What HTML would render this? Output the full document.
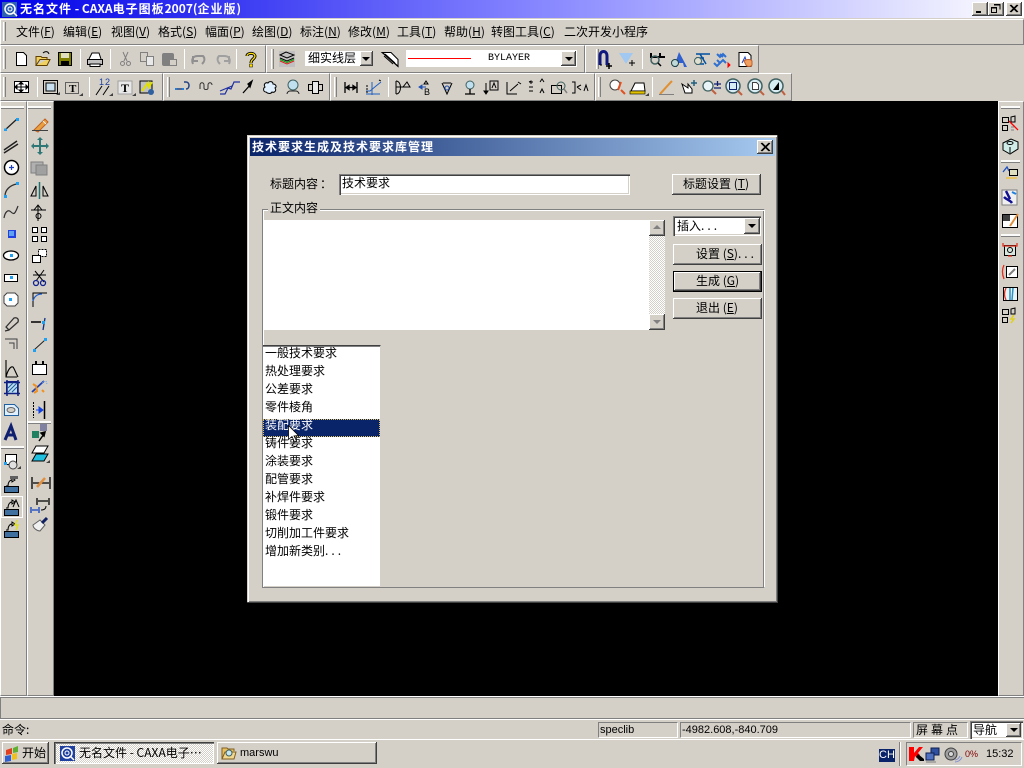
<!DOCTYPE html>
<html lang="zh"><head><meta charset="utf-8"><title>CAXA</title>
<style>
html,body{margin:0;padding:0;background:#d4d0c8}
body{width:1024px;height:768px;overflow:hidden;position:relative;font:12px/14px "WenQuanYi Zen Hei","Noto Sans CJK SC",sans-serif;color:#000}
div,span.a{position:absolute;box-sizing:border-box}
.t{white-space:nowrap}
.up{background:#d4d0c8;box-shadow:inset -1px -1px #404040,inset 1px 1px #fff,inset -2px -2px #808080}
.sunk{background:#fff;box-shadow:inset 1px 1px #808080,inset 2px 2px #404040,inset -1px -1px #fff,inset -2px -2px #d4d0c8}
.tb{background:#d4d0c8;border-top:1px solid #fff;border-left:1px solid #fff;border-bottom:1px solid #808080;border-right:1px solid #808080}
.sf{border:1px solid;border-color:#808080 #fff #fff #808080}
.w{letter-spacing:1px}
u{text-decoration:underline}
svg{position:absolute;left:0;top:0}
</style></head><body>

<!-- title bar -->
<div style="left:0;top:0;width:1024px;height:18px;background:linear-gradient(90deg,#0000e8,#8080ff 50%,#fff 100%)"></div>
<div class="t" style="left:20px;top:2px;color:#fff;font-weight:bold;font-size:12px"><span class="w">无名文件</span> - CAXA<span class="w">电子图板</span>2007(<span class="w">企业版</span>)</div>
<div class="up" style="left:972px;top:2px;width:16px;height:14px"></div>
<div class="up" style="left:988px;top:2px;width:16px;height:14px"></div>
<div class="up" style="left:1006px;top:2px;width:16px;height:14px"></div>

<!-- menu bar -->
<div class="tb" style="left:0;top:19px;width:1024px;height:26px"></div>
<div class="t" style="left:16px;top:25px">文件(<u>F</u>)</div>
<div class="t" style="left:63px;top:25px">编辑(<u>E</u>)</div>
<div class="t" style="left:111px;top:25px">视图(<u>V</u>)</div>
<div class="t" style="left:158px;top:25px">格式(<u>S</u>)</div>
<div class="t" style="left:205px;top:25px">幅面(<u>P</u>)</div>
<div class="t" style="left:252px;top:25px">绘图(<u>D</u>)</div>
<div class="t" style="left:300px;top:25px">标注(<u>N</u>)</div>
<div class="t" style="left:348px;top:25px">修改(<u>M</u>)</div>
<div class="t" style="left:397px;top:25px">工具(<u>T</u>)</div>
<div class="t" style="left:444px;top:25px">帮助(<u>H</u>)</div>
<div class="t" style="left:491px;top:25px">转图工具(<u>C</u>)</div>
<div class="t" style="left:564px;top:25px">二次开发小程序</div>

<!-- toolbars -->
<div class="tb" style="left:0;top:45px;width:266px;height:28px"></div>
<div class="tb" style="left:266px;top:45px;width:319px;height:28px"></div>
<div class="tb" style="left:585px;top:45px;width:174px;height:28px"></div>
<div class="tb" style="left:0;top:73px;width:163px;height:28px"></div>
<div class="tb" style="left:163px;top:73px;width:167px;height:28px"></div>
<div class="tb" style="left:330px;top:73px;width:265px;height:28px"></div>
<div class="tb" style="left:595px;top:73px;width:197px;height:28px"></div>

<!-- layer combo -->
<div style="left:304px;top:50px;width:69px;height:17px;background:#fff;border:1px solid #d4d0c8"></div>
<div class="t" style="left:308px;top:51px">细实线层</div>
<div class="up" style="left:360px;top:51px;width:13px;height:15px"></div>
<!-- line combo -->
<div style="left:406px;top:50px;width:171px;height:17px;background:#fff"></div>
<div style="left:408px;top:58px;width:63px;height:1px;background:#f00"></div>
<div class="t" style="left:488px;top:52px;font:10px/14px 'Liberation Mono',monospace">BYLAYER</div>
<div class="up" style="left:561px;top:51px;width:15px;height:15px"></div>

<!-- left toolbars / right toolbar -->
<div class="tb" style="left:0;top:101px;width:27px;height:595px"></div>
<div class="tb" style="left:27px;top:101px;width:27px;height:595px"></div>
<div class="tb" style="left:998px;top:101px;width:26px;height:595px"></div>

<!-- canvas -->
<div style="left:54px;top:101px;width:944px;height:595px;background:#000"></div>

<!-- status areas -->
<div style="left:0;top:696px;width:1024px;height:2px;background:#fff"></div>
<div style="left:0;top:697px;width:1024px;height:22px;background:#d4d0c8;border-top:1px solid #808080;border-left:1px solid #808080;border-bottom:1px solid #808080"></div>
<div style="left:0;top:719px;width:1024px;height:1px;background:#fff"></div>
<div class="t" style="left:2px;top:723px">命令:</div>
<div class="sf t" style="left:598px;top:722px;width:80px;height:16px;padding:0 1px;font:11px/14px 'Liberation Sans',sans-serif">speclib</div>
<div class="sf t" style="left:680px;top:722px;width:231px;height:16px;padding:0 1px;font:11px/14px 'Liberation Sans',sans-serif">-4982.608,-840.709</div>
<div class="sf t" style="left:913px;top:722px;width:55px;height:16px;padding:0 2px;line-height:14px;letter-spacing:3px">屏幕点</div>
<div class="sunk" style="left:970px;top:721px;width:53px;height:18px"></div>
<div class="t" style="left:973px;top:723px">导航</div>
<div class="up" style="left:1006px;top:723px;width:15px;height:14px"></div>
<div style="left:0;top:739px;width:1024px;height:1px;background:#fff"></div>

<!-- taskbar -->
<div class="up" style="left:2px;top:742px;width:47px;height:22px"></div>
<div class="t" style="left:22px;top:746px">开始</div>
<div style="left:54px;top:742px;width:160px;height:22px;background-color:#fff;background-image:repeating-conic-gradient(#d4d0c8 0 25%,#fff 0 50%);background-size:2px 2px;box-shadow:inset 1px 1px #404040,inset 2px 2px #808080,inset -1px -1px #fff"></div>
<div class="t" style="left:79px;top:746px">无名文件 - CAXA电子…</div>
<div class="up" style="left:217px;top:742px;width:160px;height:22px"></div>
<div class="t" style="left:240px;top:746px;font:11px/14px 'Liberation Sans',sans-serif">marswu</div>
<div style="left:879px;top:749px;width:16px;height:13px;background:#0a246a;color:#fff;text-align:center;font:11px/13px 'Liberation Sans',sans-serif">CH</div>
<div style="left:899px;top:742px;width:1px;height:24px;background:#808080"></div>
<div style="left:900px;top:742px;width:1px;height:24px;background:#fff"></div>
<div class="sf" style="left:906px;top:742px;width:116px;height:24px"></div>
<div class="t" style="left:965px;top:749px;font:9px/10px 'Liberation Sans',sans-serif;color:#800000">0%</div>
<div class="t" style="left:986px;top:747px;font:11px/14px 'Liberation Sans',sans-serif">15:32</div>

<!-- dialog -->
<div style="left:247px;top:135px;width:531px;height:468px;background:#d4d0c8;box-shadow:inset -1px -1px #404040,inset 1px 1px #d4d0c8,inset 2px 2px #fff,inset -2px -2px #808080"></div>
<div style="left:250px;top:138px;width:525px;height:18px;background:linear-gradient(90deg,#0a246a,#a6caf0)"></div>
<div class="t w" style="left:252px;top:140px;color:#fff;font-weight:bold">技术要求生成及技术要求库管理</div>
<div class="up" style="left:757px;top:140px;width:16px;height:14px"></div>

<div class="t" style="left:270px;top:177px">标题内容</div>
<div class="t" style="left:320px;top:177px">：</div>
<div class="sunk" style="left:339px;top:174px;width:291px;height:21px"></div>
<div class="t" style="left:342px;top:176px">技术要求</div>
<div class="up" style="left:672px;top:174px;width:89px;height:21px"></div>
<div class="t" style="left:683px;top:177px">标题设置 (<u>T</u>)</div>

<div style="left:262px;top:209px;width:503px;height:379px;border:1px solid;border-color:#808080 #fff #808080 #808080;box-shadow:inset 1px 1px #fff,inset -1px 0 #808080"></div>
<div class="t" style="left:268px;top:201px;background:#d4d0c8;padding:0 2px">正文内容</div>

<div style="left:264px;top:220px;width:385px;height:110px;background:#fff"></div>
<div style="left:649px;top:220px;width:16px;height:110px;background-color:#fff;background-image:repeating-conic-gradient(#d4d0c8 0 25%,#fff 0 50%);background-size:2px 2px"></div>
<div class="up" style="left:649px;top:220px;width:16px;height:16px"></div>
<div class="up" style="left:649px;top:314px;width:16px;height:16px"></div>

<div class="sunk" style="left:673px;top:216px;width:88px;height:20px"></div>
<div class="t" style="left:677px;top:219px">插入<span style="letter-spacing:3px">...</span></div>
<div class="up" style="left:744px;top:218px;width:16px;height:16px"></div>

<div class="up" style="left:673px;top:244px;width:89px;height:21px"></div>
<div class="t" style="left:696px;top:247px">设置 (<u>S</u>)<span style="letter-spacing:3px">...</span></div>
<div class="up" style="left:673px;top:271px;width:89px;height:21px;border:1px solid #000"></div>
<div class="t" style="left:696px;top:274px">生成 (<u>G</u>)</div>
<div class="up" style="left:673px;top:298px;width:89px;height:21px"></div>
<div class="t" style="left:696px;top:301px">退出 (<u>E</u>)</div>

<!-- list -->
<div style="left:263px;top:345px;width:118px;height:241px;background:#fff;overflow:hidden;border-top:1px solid #404040;border-right:1px solid #d4d0c8;box-shadow:inset 0 1px #808080">
<div style="left:0;top:73px;width:117px;height:18px;background:#0a246a;outline:1px dotted #e0c060;outline-offset:-1px"></div>
<div class="t" style="left:2px;top:0">一般技术要求</div>
<div class="t" style="left:2px;top:18px">热处理要求</div>
<div class="t" style="left:2px;top:36px">公差要求</div>
<div class="t" style="left:2px;top:54px">零件棱角</div>
<div class="t" style="left:2px;top:72px;color:#fff">装配要求</div>
<div class="t" style="left:2px;top:90px">铸件要求</div>
<div class="t" style="left:2px;top:108px">涂装要求</div>
<div class="t" style="left:2px;top:126px">配管要求</div>
<div class="t" style="left:2px;top:144px">补焊件要求</div>
<div class="t" style="left:2px;top:162px">锻件要求</div>
<div class="t" style="left:2px;top:180px">切削加工件要求</div>
<div class="t" style="left:2px;top:198px">增加新类别<span style="letter-spacing:3px">...</span></div>
</div>

<!-- all icons -->
<svg width="1024" height="768" viewBox="0 0 1024 768" fill="none" stroke-width="1">
<!-- app icon -->
<rect x="2" y="2" width="15" height="15" fill="#3060b0"/><circle cx="10" cy="9" r="5" stroke="#fff" stroke-width="1.500"/><circle cx="10" cy="9" r="2" stroke="#fff"/><path d="M13 12l4 4" stroke="#fff" stroke-width="1.500"/>
<!-- window buttons -->
<path d="M976 12h5" stroke="#000" stroke-width="2"/>
<path d="M994 4.500h6v5M991.500 7.500h5v5h-5z" stroke="#000"/><path d="M994 5h6M991 8h6" stroke="#000"/>
<path d="M1010 5l7 7M1017 5l-7 7M1011 5l7 7M1018 5l-7 7" stroke="#000"/>
<!-- grippers -->
<g stroke-width="1"><path d="M3.500 22v19" stroke="#fff"/><path d="M5.500 22v19" stroke="#808080"/>
<path d="M3.500 49v20M3.500 77v20M271.500 49v20M596.500 49v20M334.500 77v20M167.500 77v20M598.500 77v20" stroke="#fff"/>
<path d="M5.500 49v20M5.500 77v20M273.500 49v20M598.500 49v20M336.500 77v20M169.500 77v20M600.500 77v20" stroke="#808080"/>
<!-- separators -->
<path d="M80.500 49v20M110.500 49v20M184.500 49v20M236.500 49v20M642.500 49v20M37.500 77v20M89.500 77v20M388.500 77v20M652.500 77v20" stroke="#fff"/>
<path d="M1 107h23M28 107h23M1 447h23M28 422h23M1001 107h19M1001 161h19M1001 235h19" stroke="#fff" stroke-width="2" opacity=".9"/>
<path d="M1 108.500h23M28 108.500h23M1 448.500h23M28 423.500h23M1001 108.500h19M1001 162.500h19M1001 236.500h19" stroke="#808080"/>
</g>
<!-- row1 -->
<path d="M16.500 52.500h7l3 3v10h-10z" fill="#fff" stroke="#000"/>
<path d="M36 65.500v-9h5l1 1h5v2M36 65.500h11l3-6H40z" fill="#f0d060" stroke="#604000"/><path d="M43 53c2-2 5-2 6 1" stroke="#000"/>
<rect x="58.500" y="52.500" width="13" height="13" fill="#808000" stroke="#000"/><rect x="61" y="53" width="8" height="5" fill="#e0e0c0"/><rect x="61" y="61" width="8" height="4" fill="#000"/>
<path d="M89 59l3-6h7l2 6" fill="#fff" stroke="#000"/><rect x="87.500" y="59.500" width="15" height="5" fill="#c0c0c0" stroke="#000"/><rect x="90" y="64" width="10" height="2.500" fill="#fff" stroke="#000"/>
<path d="M123 52l4 9M128 52l-4 9" stroke="#808080"/><circle cx="122.500" cy="63.500" r="2" stroke="#808080"/><circle cx="128.500" cy="63.500" r="2" stroke="#808080"/>
<rect x="140.500" y="52.500" width="7" height="9" fill="#d4d0c8" stroke="#808080"/><rect x="146.500" y="56.500" width="7" height="9" fill="#e8e8e8" stroke="#808080"/>
<rect x="162" y="53" width="12" height="13" rx="2" fill="#808080"/><rect x="169.500" y="59.500" width="7" height="6" fill="#d4d0c8" stroke="#808080"/>
<path d="M193 64c-2-5 0-8 5-8h5c2 2 2 5-1 8M193 56v5h5" stroke="#909090" stroke-width="2"/>
<path d="M229 64c2-5 0-8-5-8h-5c-2 2-2 5 1 8M229 56v5h-5" stroke="#a0a0a0" stroke-width="2"/>
<path d="M247 56c0-3 7-4 8 0 0 3-4 3-4 7" stroke="#000" stroke-width="3"/><path d="M247 56c0-3 7-4 8 0 0 3-4 3-4 7" stroke="#ffe000" stroke-width="1.300"/><rect x="249.500" y="64" width="3" height="3" fill="#ffe000" stroke="#000" stroke-width=".5"/>
<rect x="279" y="51" width="16" height="16" fill="#c0c0c0"/><path d="M280 55l6-3 8 3-7 3zM280 58l7 3 7-3" stroke="#000"/><path d="M280 61l7 3 7-3" stroke="#e02020"/><path d="M280 59.500l7 3 7-3" stroke="#00a000"/>
<path d="M365 57h8l-4 4z" fill="#000" transform="translate(-3,0)"/>
<path d="M382 52.500h9l7 7v7zM398.500 66.500l-16-14M384 56l9 8M385 54l10 9" stroke="#000" fill="#fff"/>
<path d="M565 57h8l-4 4z" fill="#000"/>
<!-- right group row1 -->
<path d="M600 65v-9c0-6 7-6 7 0v9" stroke="#101880" stroke-width="3"/><path d="M607 66h2M600 65h2" stroke="#000"/><path d="M609 63v6M606 66h6" stroke="#000" stroke-width="1.500"/>
<path d="M619 53h14l-7 11z" fill="#a0c8f0"/><path d="M632 60v6M629 63h6" stroke="#000"/>
<path d="M651 53v4h14M660 53v4" stroke="#000" stroke-width="2"/><circle cx="655" cy="60" r="4" stroke="#406060" stroke-width="1.500"/><path d="M658 63l3 3" stroke="#000" stroke-width="1.500"/>
<path d="M679 52l-5 15h3l1-4h5l1 4h3z" fill="#3060d0"/><circle cx="675" cy="63" r="3.500" fill="#c0d8d8" stroke="#204040"/>
<path d="M696 54h14M700 54l6 10M704 58h-8M696 64h8" stroke="#0050a0" stroke-width="1.500"/><circle cx="698" cy="61" r="3.500" stroke="#406060" fill="#e0e0d0"/>
<path d="M717 54l3 3 3-3 3 3M717 60l3 3 3-3 3 3M720 54l3 3M714 63l3 3 3-3" stroke="#3070d0" stroke-width="2"/><path d="M728 63l2 2-2 2z" fill="#f00" stroke="#f00"/>
<path d="M739 52.500h9l3 3v11h-12z" fill="#fff" stroke="#000"/><path d="M742 63l3-6 2 6" stroke="#2040c0"/><path d="M744 61c2-2 7-2 8 0v4c-1 2-5 2-6 0z" fill="#f0a060" stroke="#c06030"/>
<!-- row2 -->
<rect x="14.500" y="81.500" width="14" height="11" fill="#fff" stroke="#000"/><path d="M21 83v8M16 87h11M21 82l-2 2h4zM21 92l-2-2h4zM15 87l2-2v4zM28 87l-2-2v4z" fill="#000" stroke="#000"/>
<rect x="43.500" y="80.500" width="14" height="13" stroke="#000"/><rect x="46" y="83" width="9" height="8" fill="#c8e0f0" stroke="#000"/><path d="M56 95h4v-3z" fill="#404040"/>
<rect x="65.500" y="82.500" width="13" height="11" stroke="#606060"/><text x="69" y="92" font-family="Liberation Serif,serif" font-weight="bold" font-size="11" fill="#000">T</text><path d="M79 96h4v-3z" fill="#404040"/>
<path d="M96 95l6-9M103 95l6-9" stroke="#000"/><text x="99" y="85" font-family="Liberation Sans,sans-serif" font-size="9" fill="#2040a0">1</text><text x="105" y="85" font-family="Liberation Sans,sans-serif" font-size="9" fill="#2040a0">2</text><path d="M109 96h4v-3z" fill="#404040"/>
<rect x="118" y="81" width="14" height="13" fill="#e8e8e8" stroke="#a0a0a0"/><text x="121" y="92" font-family="Liberation Serif,serif" font-weight="bold" font-size="12" fill="#000">T</text><path d="M132 96h4v-3z" fill="#404040"/>
<rect x="140" y="81" width="12" height="12" fill="#c0c0c0" stroke="#000"/><path d="M142 91l6-8 1 4 3-5" stroke="#e0e000" stroke-width="2"/><circle cx="151" cy="92" r="3" fill="#3060a0"/>
<path d="M176 89h7" stroke="#204080" stroke-width="1.500"/><path d="M184 82h2c4 0 4 7 0 7" stroke="#204080" stroke-width="1.500"/><rect x="175" y="88" width="2" height="2" fill="#2080e0"/><rect x="182" y="88" width="2" height="2" fill="#2080e0"/>
<path d="M200 90v-4c0-3 4-3 4 0v3c0 2 4 2 4 0v-3c0-3 4-3 4 0" stroke="#303030" transform="translate(0,-1)"/>
<path d="M220 94h5l3-6 3 1 3-7h6M220 91l12-5" stroke="#2030a0" stroke-width="1.200"/>
<path d="M243 93l8-9M252 81l-4 3 2 3z" stroke="#000" fill="#000" stroke-width="1.300"/>
<path d="M266 92c-3 0-3-4-1-5-2-3 1-5 3-4 1-2 5-2 5 1 3 0 4 3 2 4 2 3-1 5-3 4-1 2-4 2-6 0z" fill="#e0f0ff" stroke="#000"/>
<circle cx="293" cy="85" r="5" fill="#c0e0f0" stroke="#406060"/><path d="M287 94c0-2 2-3 3-3h6c1 0 3 1 3 3" stroke="#202020"/>
<rect x="308.500" y="84.500" width="14" height="6" stroke="#000"/><rect x="312.500" y="81.500" width="6" height="12" stroke="#000" fill="#e8e8e8"/>
<path d="M345 82v11M357 82v11M346 87.500h10M346 87.500l3-2v4zM356 87.500l-3-2v4z" stroke="#000" stroke-width="1.300"/>
<path d="M366 91h4l6-5 5-4M372 82v13M366 94h14" stroke="#2060c0"/><path d="M367 85v8M379 80l2 1" stroke="#000" stroke-dasharray="2 1"/>
<path d="M396 81v13M396 81c6 0 6 13 0 13M403 87l4-5 3 5zM396 87h7" stroke="#000"/>
<path d="M419 87h7M419 87l3-2v4z" stroke="#2050b0" fill="#2050b0"/><text x="424" y="95" font-family="Liberation Sans,sans-serif" font-size="9" fill="#000">B</text><path d="M424 84l2-3 2 3z" stroke="#000"/>
<path d="M442 83l5 11 5-11M443 83h8" stroke="#000"/><circle cx="447" cy="88" r="2" stroke="#2050b0"/>
<circle cx="470" cy="85" r="4" stroke="#406060" fill="#c0e0f0"/><path d="M470 89v5M465 94h10" stroke="#000" stroke-width="1.300"/>
<path d="M486 83v11M486 94l-2-3h4z" stroke="#000" fill="#000"/><rect x="490" y="81" width="8" height="9" stroke="#000"/><path d="M492 88l2-5 2 5" stroke="#000"/>
<path d="M507 82v12h10M510 91l8-7" stroke="#000"/><path d="M518 82l3 2" stroke="#000"/>
<path d="M529 82h4M529 82l2-1v3M540 82l2-3 2 3M529 91h4M540 93l2-4 2 4M533 87h-4" stroke="#000"/>
<rect x="551.500" y="85.500" width="10" height="8" stroke="#000"/><circle cx="561" cy="86" r="4" stroke="#406060"/><path d="M564 89l3 4" stroke="#808080" stroke-width="1.500"/>
<path d="M572 82h3v11h-3M577 87l4-2M577 87l4 3M584 91l2-6 2 6" stroke="#000"/>
<circle cx="615" cy="85" r="5" stroke="#404040" fill="#fff"/><path d="M621 82l-3 8M625 94l-4-4" stroke="#e05020" stroke-width="2"/>
<path d="M631 91l4-8h9l1 8z" fill="#fff" stroke="#000"/><rect x="630" y="91" width="15" height="3" fill="#e0c000" stroke="#000" stroke-width=".6"/><path d="M645 96h4v-3z" fill="#404040"/>
<path d="M660 94c3-3 7-8 12-13" stroke="#e09030" stroke-width="2"/><path d="M659 94.500h15" stroke="#808080"/>
<path d="M682 84l6 4v-4l4 5v4h-7z" fill="#fff" stroke="#000"/><path d="M691 83h6M694 80v6" stroke="#206080" stroke-width="1.500"/>
<circle cx="708" cy="86" r="5" stroke="#406060" fill="#e8f4f8" stroke-width="1.300"/><path d="M712 90l4 4" stroke="#c06040" stroke-width="2"/><path d="M714 84h7M717.500 81v5M714 88h7" stroke="#102070" stroke-width="1.300"/>
<circle cx="733" cy="86" r="7" stroke="#406060" fill="#d8ecf4" stroke-width="1.500"/><rect x="729.500" y="82.500" width="7" height="7" stroke="#102070"/><path d="M738 91l4 4" stroke="#c06040" stroke-width="2"/>
<circle cx="755" cy="86" r="7" stroke="#406060" fill="#d8ecf4" stroke-width="1.500"/><path d="M752.500 82.500h4l2 2v5h-6z" fill="#fff" stroke="#404040"/><path d="M760 91l4 4" stroke="#c06040" stroke-width="2"/>
<circle cx="776" cy="86" r="7" stroke="#406060" fill="#d8ecf4" stroke-width="1.500"/><path d="M773 90l6-8v8z" fill="#000"/><path d="M782 91l3 4" stroke="#c06040" stroke-width="2"/>
<!-- left col 1 -->
<path d="M5 130L17 119" stroke="#202020" stroke-width="1.300"/><rect x="4" y="128.500" width="3" height="2.500" fill="#20a0f0"/><rect x="16" y="118" width="3" height="3" fill="#20a0f0"/>
<path d="M4 150L17 141M4 153L18 144" stroke="#202020" stroke-width="1.500"/>
<circle cx="11.500" cy="167.500" r="7" fill="#fff" stroke="#000" stroke-width="1.500"/><path d="M9 167.500h5M11.500 165v5" stroke="#2040c0" stroke-width="1.200"/>
<path d="M5 196c0-6 5-11 12-12" stroke="#303030" stroke-width="1.300"/><rect x="4" y="195" width="3" height="3" fill="#20a0f0"/><rect x="16" y="182" width="3" height="3" fill="#20a0f0"/>
<path d="M4 218c1-6 4-9 7-6s4 2 7-6" stroke="#303030" stroke-width="1.200"/>
<rect x="8" y="230" width="8" height="8" fill="#2040e0"/><rect x="9" y="231" width="5" height="5" fill="#60a0f0"/>
<ellipse cx="11" cy="255.500" rx="7.500" ry="4.500" fill="#fff" stroke="#000" stroke-width="1.300"/><rect x="10" y="254" width="3" height="3" fill="#20a0f0"/>
<rect x="4.500" y="274.500" width="13" height="7" fill="#fff" stroke="#000"/><rect x="10" y="276" width="3" height="3" fill="#20a0f0"/>
<path d="M7 293h8l3 3v7l-3 3H7l-3-3v-7z" fill="#fff" stroke="#404040"/><rect x="9" y="298" width="3" height="3" fill="#20a0f0"/>
<path d="M6 327l8-9c3-1 5 1 4 4l-9 8zM5 331l4-1" stroke="#303030" stroke-width="1.300"/>
<path d="M5 339h12v10M9 343h5v6" stroke="#404040"/>
<path d="M6 360v17h11M6 377c2-8 5-11 7-10 1 1 2 4 5 10" stroke="#000" stroke-width="1.100"/>
<rect x="6.500" y="381.500" width="11" height="12" fill="#c0e0f0" stroke="#102080"/><path d="M4 382.500h16M4 393.500h16M7 380v16M18 380v16" stroke="#102080" stroke-width="1.500"/><path d="M8 392l9-9M8 388l5-5M12 392l5-5" stroke="#2060a0"/>
<path d="M4.500 404.500h10l4 4v7h-14z" fill="#e0f0ff" stroke="#2060a0"/><ellipse cx="11" cy="410" rx="4" ry="2.500" fill="#d4d0c8" stroke="#606060"/>
<path d="M5 440l6-14 5 14M7 435h7" stroke="#102070" stroke-width="3" fill="none"/>
<rect x="5.500" y="454.500" width="11" height="10" fill="#fff" stroke="#000"/><circle cx="13" cy="465" r="4" fill="#e0e0e0" stroke="#404040"/><rect x="4" y="462" width="3" height="3" fill="#20a0f0"/><path d="M17 469h4v-3z" fill="#404040"/>
<path d="M6 486h2c0-4 2-6 4-6M12 478l3 2-3 2z" stroke="#000"/><rect x="10" y="476" width="8" height="3" fill="#606060"/><rect x="4.500" y="486.500" width="14" height="6" fill="#4070a0" stroke="#000"/>
<path d="M6 508h2c0-4 2-6 4-6M12 500l3 2-3 2z" stroke="#000"/><path d="M13 507l3-7 3 7" stroke="#000"/><rect x="4.500" y="509.500" width="14" height="6" fill="#4070a0" stroke="#000"/>
<rect x="1.500" y="496.500" width="21" height="21" stroke="#fff"/>
<path d="M6 530h2c0-4 2-6 4-6M12 522l3 2-3 2z" stroke="#000"/><path d="M17 520l-2 5h3l-2 5" stroke="#e0e020" stroke-width="1.500"/><rect x="4.500" y="531.500" width="14" height="6" fill="#4070a0" stroke="#000"/>
<!-- left col 2 -->
<path d="M34 130l11-11 3 3-10 10z" fill="#e8a040" stroke="#c06020"/><path d="M32 130.500h16" stroke="#404040"/><path d="M43 121l3 3" stroke="#f0f0f0"/>
<path d="M40 139v14M33 146h14" stroke="#307878" stroke-width="2"/><path d="M40 137l-3 3h6zM40 155l-3-3h6zM31 146l3-3v6zM49 146l-3-3v6z" fill="#307878"/>
<rect x="31" y="162" width="12" height="11" fill="#b0b0b0" stroke="#808080"/><rect x="36" y="165" width="11" height="10" fill="#a0a0a0" stroke="#808080"/>
<path d="M39.500 182v17M36 186v10h-5zM43 186v10h5z" stroke="#000"/><path d="M39.500 182v17" stroke="#207070" stroke-width="1.500"/>
<circle cx="38.500" cy="216" r="2.500" stroke="#000"/><path d="M38 205v16M31 210h15M34 210l4-5 4 5" stroke="#000"/>
<g fill="#fff" stroke="#000"><rect x="32.500" y="227.500" width="5" height="5"/><rect x="41.500" y="227.500" width="5" height="5"/><rect x="32.500" y="236.500" width="5" height="5"/><rect x="41.500" y="236.500" width="5" height="5"/></g>
<rect x="38.500" y="249.500" width="8" height="7" fill="#fff" stroke="#000" stroke-dasharray="2 1"/><rect x="32.500" y="255.500" width="8" height="7" fill="#fff" stroke="#000"/>
<path d="M35 271l9 11M44 270l-8 11M33 275h13" stroke="#000"/><circle cx="36" cy="283" r="2.500" stroke="#102090" stroke-width="1.300"/><circle cx="43" cy="283" r="2.500" stroke="#102090" stroke-width="1.300"/>
<path d="M33 307v-14h14" stroke="#000"/><path d="M33 301c1-4 4-7 9-7" stroke="#2060d0" stroke-width="1.300"/>
<path d="M31 322h10" stroke="#000" stroke-width="1.500"/><path d="M45 318l-2 12" stroke="#103080" stroke-width="1.300"/><rect x="42" y="321" width="3" height="3" fill="#20a0f0"/>
<path d="M34 350l11-10" stroke="#202020"/><rect x="33" y="349" width="3" height="3" fill="#20a0f0"/><rect x="44" y="338" width="3" height="3" fill="#20a0f0"/>
<rect x="32.500" y="364.500" width="14" height="10" fill="#fff" stroke="#000"/><path d="M36 364v-3M43 364v-3" stroke="#000" stroke-width="2"/>
<path d="M32 392l12-11" stroke="#2040b0" stroke-width="1.800"/><path d="M33 384l3 2 1 5-3 2M42 390l2 2" stroke="#f09020" stroke-width="2"/><path d="M42 383l2-2M46 381l1 3" stroke="#60a0f0" stroke-dasharray="1 1"/>
<path d="M33.500 402v16" stroke="#000" stroke-dasharray="2 1"/><path d="M44.500 401v18" stroke="#000" stroke-width="1.500"/><path d="M36 410h4M43 410l-4-3v6z" stroke="#1040e0" fill="#1040e0"/>
<rect x="40" y="424" width="7" height="7" fill="#8080a0"/><rect x="32" y="431" width="7" height="7" fill="#208060"/><path d="M39 441l5-7M45 432l-4 1 3 3z" stroke="#000" fill="#000" stroke-width="1.500"/>
<path d="M32 453l4-7h12l-4 7z" fill="#fff" stroke="#000"/><path d="M32 461l4-7h12l-4 7z" fill="#20c0e0" stroke="#000"/><path d="M46 463h4v-3z" fill="#404040"/>
<path d="M32 477v12M50 477v12M33 483h16" stroke="#000" stroke-width="1.300"/><path d="M37 487l8-9" stroke="#e09040" stroke-width="2.500"/>
<path d="M37 498v7M49 498v7M38 501h10" stroke="#000" stroke-width="1.300"/><path d="M31 507v6M39 507v6M32 510h6" stroke="#1040c0" stroke-width="1.300"/><path d="M41 510c4 0 5-2 5-4" stroke="#000"/>
<path d="M33 525l7-5 5 5-5 6c-3 0-7-3-7-6z" fill="#f0f0f0" stroke="#606060"/><path d="M42 523l5-5" stroke="#102060" stroke-width="3"/>
<!-- right toolbar -->
<g stroke="#000"><rect x="1002.500" y="117.500" width="6" height="5"/><path d="M1011 122v-5l4-1v6z"/><rect x="1002.500" y="125.500" width="5" height="5"/></g><path d="M1009 121l9 9" stroke="#f00" stroke-width="1.300"/><path d="M1011 127h3M1011 130h3" stroke="#808080"/>
<path d="M1003 143l8-4 7 3v7l-8 5-7-4z" fill="#d0ece8" stroke="#000"/><ellipse cx="1010" cy="143" rx="3" ry="1.500" stroke="#000"/><path d="M1010 147v6" stroke="#000"/>
<path d="M1003 172l4-5 2 4" stroke="#2050c0" stroke-width="1.300"/><rect x="1009.500" y="169.500" width="8" height="6" stroke="#000" fill="#e0e0c0"/><path d="M1006 178h11" stroke="#f0c040" stroke-width="1.500"/>
<rect x="1002" y="190" width="15" height="15" fill="#f0f0f0" stroke="#808080"/><path d="M1006 191l4 8M1004 197c3 3 6 3 8 6" stroke="#101090" stroke-width="2.500"/><path d="M1012 192l4 2" stroke="#2080e0" stroke-width="2"/>
<rect x="1002.500" y="214.500" width="15" height="13" fill="#fff" stroke="#000"/><rect x="1003" y="215" width="7" height="6" fill="#404040"/><path d="M1010 226l8-12" stroke="#e09040" stroke-width="2"/>
<rect x="1004.500" y="245.500" width="11" height="10" fill="#d8e8e0" stroke="#000"/><circle cx="1010" cy="250" r="2.500" stroke="#000"/><path d="M1003 243v3h14v-3M1008 256h4" stroke="#e03020" stroke-width="1.300"/>
<rect x="1006.500" y="266.500" width="11" height="11" fill="#fff" stroke="#000"/><path d="M1009 275l6-6" stroke="#808080" stroke-width="2"/><path d="M1004 265c-2 4-2 9 0 14" stroke="#e03020" stroke-width="1.300"/>
<rect x="1003.500" y="287.500" width="14" height="13" fill="#e8f4f8" stroke="#000"/><path d="M1006 288c-2 4-2 8 0 12" stroke="#e03020" stroke-width="1.300"/><path d="M1010 288v12M1013 288l-1 12" stroke="#3090c0" stroke-width="1.500"/>
<g stroke="#000"><rect x="1002.500" y="309.500" width="6" height="5"/><path d="M1011 314v-5l4-1v6z"/><rect x="1002.500" y="317.500" width="5" height="5"/></g><path d="M1014 315l-3 4h3l-3 4" stroke="#e0d020" stroke-width="1.500"/>
<!-- dialog glyphs -->
<path d="M761 143l8 8M769 143l-8 8M762 143l8 8M770 143l-8 8" stroke="#000"/>
<path d="M657 225l-4 4h8z" fill="#808080"/><path d="M653 320h8l-4 4z" fill="#808080"/>
<path d="M748 224h8l-4 4z" fill="#000"/><path d="M1010 728h8l-4 4z" fill="#000"/>
<!-- cursor -->
<path d="M288.500 425.500v14l3.500-3 2.500 5.500 2-1-2.500-5 4.500-.5z" fill="#fff" stroke="#000" stroke-width=".8"/>
<!-- taskbar icons -->
<path d="M6 750l6-2v6l-6 1z" fill="#e04020"/><path d="M13 748l5-2v6l-5 1z" fill="#60b030"/><path d="M5 756l6-1v6l-6 1z" fill="#3060d0"/><path d="M12 754l5-1v6l-5 1z" fill="#f0c020"/>
<rect x="60" y="746" width="15" height="15" fill="#2040a0"/><circle cx="67" cy="753" r="5" stroke="#fff" stroke-width="1.500"/><circle cx="67" cy="753" r="2" stroke="#fff"/><path d="M70 756l4 4" stroke="#fff" stroke-width="1.500"/>
<path d="M222 759v-11h5l1 1h6v2" fill="#e8c060" stroke="#806020"/><path d="M222 759h12l2-7h-11z" fill="#f0d890" stroke="#806020"/><circle cx="229" cy="753" r="3" fill="#c8e8f0" stroke="#406060"/>
<path d="M909 747h5v6l5-6h4l-5 6 2 2-3 3-2-2-1 5h-5z" fill="#f00"/><path d="M918 754l6 5v2h-4l-4-4z" fill="#000"/>
<rect x="931" y="748" width="8" height="7" fill="#3050a0" stroke="#102050"/><rect x="926" y="753" width="8" height="7" fill="#5070c0" stroke="#102050"/><path d="M926 762h10" stroke="#808080"/>
<circle cx="951" cy="754" r="6" fill="#a0a0a0" stroke="#404040"/><circle cx="951" cy="754" r="2.500" fill="#d8d8d8" stroke="#404040"/><path d="M955 760c2 0 4-2 5-4M955 762c3 0 6-2 7-5" stroke="#8090d0"/>
</svg>
</body></html>
